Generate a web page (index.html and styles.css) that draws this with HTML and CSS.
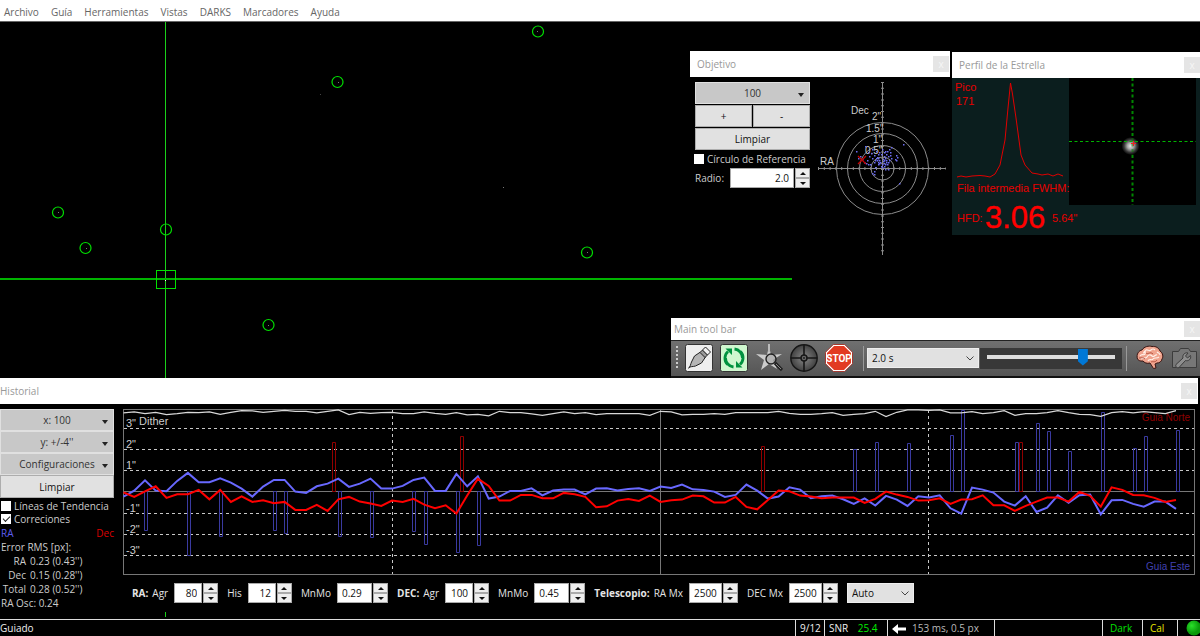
FILE: index.html
```html
<!DOCTYPE html>
<html lang="es">
<head>
<meta charset="utf-8">
<title>Guiado</title>
<link rel="stylesheet" href="styles.css">
</head>
<body>
<div class="app">
  <nav class="menubar">
    <button class="menu">Archivo</button>
    <button class="menu">Guía</button>
    <button class="menu">Herramientas</button>
    <button class="menu">Vistas</button>
    <button class="menu">DARKS</button>
    <button class="menu">Marcadores</button>
    <button class="menu">Ayuda</button>
  </nav>

  <main class="view">
    <svg class="sky" width="1200" height="357" viewBox="0 21 1200 357" aria-hidden="true">
      <path d="M165.500 21V378" stroke="#1ad01a"/>
      <path d="M0 279H792" stroke="#00b400" stroke-width="2"/>
      <rect x="156.500" y="270.500" width="19" height="18" fill="none" stroke="#00e000"/>
      <g fill="none" stroke="#00e000" stroke-width="1.200">
        <circle cx="538" cy="31.500" r="5.500"/><circle cx="337.500" cy="82" r="5.500"/>
        <circle cx="58" cy="212.500" r="5.500"/><circle cx="85.500" cy="248" r="5.500"/>
        <circle cx="166" cy="229.500" r="5.500"/><circle cx="587" cy="252.500" r="5.500"/>
        <circle cx="268.500" cy="325" r="5.500"/>
      </g>
      <g fill="#777">
        <rect x="537" y="31" width="1" height="1"/><rect x="338" y="82" width="1" height="1"/>
        <rect x="58" y="212" width="1" height="1"/><rect x="86" y="248" width="1" height="1"/>
        <rect x="587" y="252" width="1" height="1"/><rect x="268" y="325" width="1" height="1"/>
        <rect x="165" y="280" width="1" height="1" fill="#fff"/>
        <rect x="320" y="94" width="1" height="1" fill="#444"/><rect x="503" y="187" width="1" height="1"/>
      </g>
    </svg>

    <section class="window target">
      <header class="titlebar"><h2>Objetivo</h2><button class="close" aria-label="Cerrar">x</button></header>
      <div class="target-body">
        <div class="target-controls">
          <button class="btn drop">100</button>
          <div class="pair"><button class="btn">+</button><button class="btn">-</button></div>
          <button class="btn">Limpiar</button>
          <label class="check"><input type="checkbox">Círculo de Referencia</label>
          <div class="field radius"><label for="radius">Radio:</label>
            <input class="num" id="radius" type="text" value="2.0"><span class="spin"><button aria-label="Subir"></button><button aria-label="Bajar"></button></span></div>
        </div>
        <svg class="scope" width="130" height="177" viewBox="817 80 130 177">
          <g fill="none" stroke="#8c8c8c">
            <circle cx="882.500" cy="168.500" r="11.500"/><circle cx="882.500" cy="168.500" r="23"/>
            <circle cx="882.500" cy="168.500" r="35"/><circle cx="882.500" cy="168.500" r="46"/>
            <path d="M882.500 82V255M818 168.500H946"/>
            <path d="M882.500 82V255" stroke-width="3" stroke-dasharray="1 4.800"/>
            <path d="M818 168.500H946" stroke-width="3" stroke-dasharray="1 4.800"/>
          </g>
          <g class="scope-text">
            <text x="851" y="114">Dec</text><text x="820" y="165">RA</text>
            <text x="872" y="120">2"</text><text x="866" y="132">1.5"</text>
            <text x="873" y="143">1"</text><text x="865" y="154">0.5"</text>
          </g>
          <path id="shots" fill="#6c6cf0"/>
          <path d="M858 156l8 8m0-8l-8 8" stroke="#c80000" stroke-width="1.200"/>
        </svg>
      </div>
    </section>

    <section class="window profile">
      <header class="titlebar"><h2>Perfil de la Estrella</h2><button class="close" aria-label="Cerrar">x</button></header>
      <svg class="star" width="248" height="157" viewBox="952 78 248 157">
        <rect x="952" y="78" width="248" height="157" fill="#0b1e1e"/>
        <rect x="1069" y="78" width="127" height="127" fill="#000"/>
        <defs><radialGradient id="glow"><stop offset="0" stop-color="#e8e8e8"/><stop offset=".35" stop-color="#a5a5a5"/><stop offset=".7" stop-color="#3c3c3c"/><stop offset="1" stop-color="#000"/></radialGradient></defs>
        <path d="M1132.500 78V205" stroke="#008800" stroke-width="2" stroke-dasharray="3 2.500"/>
        <circle cx="1130.500" cy="146" r="9" fill="url(#glow)"/>
        <path d="M1132.500 138V155" stroke="#008800" stroke-opacity=".5" stroke-width="2" stroke-dasharray="3 2.500"/>
        <path d="M1069 141.500H1196" stroke="#00b400" stroke-dasharray="3 2.500"/>
        <path d="M1133.500 141v5M1131 143.500h5" stroke="#f02020"/>
        <polyline fill="none" stroke="#e00000" points="957,177 961,176 966,177 972,176 980,175.500 985,176 990,177 995,174 1000,165 1005,140 1008,108 1010.500,83 1012.500,94 1016,118 1021,155 1025,165 1032,173 1038,174 1042,175 1048,174 1053,176 1058,174 1063,176"/>
        <g class="star-text">
          <text x="955" y="91">Pico</text><text x="956" y="105">171</text>
          <text x="957" y="192">Fila intermedia FWHM:</text>
          <text x="957" y="222">HFD:</text><text class="hfd" x="985" y="228">3.06</text><text x="1052" y="222">5.64"</text>
        </g>
      </svg>
    </section>

    <section class="window tools">
      <header class="titlebar"><h2>Main tool bar</h2><button class="close" aria-label="Cerrar">x</button></header>
      <div class="toolbar">
        <span class="grip"></span>
        <button class="tool" aria-label="Conectar"><svg viewBox="0 0 28 28" width="28" height="28"><rect x=".5" y=".5" width="27" height="27" rx="2" fill="#eee" stroke="#333"/><path d="M3.500 24c2-1 2-4 3-6l3-6 6-4 5 5-4 6-6 3c-3 1-5 0-7 2z" fill="#b5b5b5" stroke="#222"/><path d="M15 8.500l2.500-2.500 5 5-2.500 2.500z" fill="#999" stroke="#222"/><path d="M17.500 6l3-3 5 5-3 3z" fill="#eee" stroke="#222"/></svg></button>
        <button class="tool" aria-label="Bucle"><svg viewBox="0 0 28 28" width="28" height="28"><rect x=".5" y=".5" width="27" height="27" rx="2" fill="#cff7cf" stroke="#333"/><g fill="none" stroke="#00923f" stroke-width="2.800"><path d="M7.500 20.500A9 9 0 0 1 8 7.500"/><path d="M14.500 5A9 9 0 0 1 22.500 14"/><path d="M20.500 7.500A9 9 0 0 1 20 20.500"/><path d="M13.500 23A9 9 0 0 1 5.500 14"/></g><path d="M5.500 4.500h6.500v6.500zM22.500 23.500h-6.500v-6.500z" fill="#00923f"/></svg></button>
        <button class="tool" aria-label="Seleccionar estrella"><svg viewBox="0 0 28 28" width="28" height="28"><path d="M14 2l2 9 11-1-9 6 4 9-8-5-8 6 3-10-8-6 11 1z" fill="#ccc"/><path d="M13 0h2v8h-2z" fill="#bbb"/><circle cx="16" cy="15" r="5" fill="#aaa" fill-opacity=".7" stroke="#222" stroke-width="1.400"/><path d="M20 19l7 7" stroke="#222" stroke-width="3.200"/><path d="M21 20l5 5" stroke="#888"/></svg></button>
        <button class="tool" aria-label="Guiar"><svg viewBox="0 0 28 28" width="28" height="28"><defs><radialGradient id="lens"><stop offset="0" stop-color="#888"/><stop offset="1" stop-color="#404040"/></radialGradient></defs><circle cx="14" cy="14" r="13.200" fill="url(#lens)" stroke="#161616" stroke-width="1.400"/><path d="M14 1v26M1 14h26" stroke="#161616" stroke-width="1.600"/><circle cx="14" cy="14" r="3" fill="#666" stroke="#161616" stroke-width="1.500"/><circle cx="14" cy="14" r="1" fill="#222"/></svg></button>
        <button class="tool" aria-label="Detener"><svg viewBox="0 0 28 28" width="28" height="28"><path d="M8.300.5h11.400l7.800 7.800v11.400l-7.800 7.800H8.300L.5 19.700V8.300z" fill="#fff" stroke="#a01c10" stroke-width=".8"/><path d="M9 2h10l7 7v10l-7 7H9l-7-7V9z" fill="#e23a22"/><text x="14" y="18" class="stop">STOP</text></svg></button>
        <span class="rule"></span>
        <select class="exposure" aria-label="Exposición"><option>2.0 s</option></select>
        <label class="slider"><input type="range" min="0" max="100" value="77" aria-label="Brillo"></label>
        <span class="rule"></span>
        <button class="tool" aria-label="Ajustes avanzados"><svg viewBox="0 0 28 28" width="28" height="28"><path d="M1.500 15C0 10 3 6.500 6 6c2-3.500 7-4.500 10-3.500 4-.5 7 1.500 8 4.500 3 2 3.500 6 2 8-.5 3-3 4-5 4l-2 1 1 4-2.500.5-3.500-5.500c-3 1-6-.5-7-2-3 .5-5-1-5.500-2z" fill="#f0a48e" stroke="#3a1512"/><path d="M4 12c2-3 4 0 5-2s-1-3 1-4 3 2 5 0 3-1 4 0M5 15c2-2 5 0 6-2s3-3 5-1 3-2 5-1M12 17c1-3 4 0 5-2s4 0 6-2M21 8c1 1 3 1 3 3M8 7c1 1 0 2-1 2" fill="none" stroke="#fff0e8" stroke-width="1.100"/><path d="M3 14c3 0 4-1 6 1M10 9c2 2 4-2 7 1M15 18c2-1 4 1 6-2" fill="none" stroke="#a8402e" stroke-width=".8"/></svg></button>
        <button class="tool" aria-label="Ajustes de cámara"><svg viewBox="0 0 28 28" width="28" height="28"><path d="M1.500 7.500h6l2-3h8l2 3h6v16h-24z" fill="#777" stroke="#3c3c3c"/><path d="M5 20.500l7-6.500c-1-3 2-6 5-5l-2.500 3 2 2 3-2.500c1 3.500-2 6-5 5l-6.500 7c-2 1-4-1-3-3z" fill="#8e8e8e" stroke="#3c3c3c"/></svg></button>
      </div>
    </section>
  </main>

  <section class="history">
    <header class="titlebar"><h2>Historial</h2><button class="close" aria-label="Cerrar">x</button></header>
    <div class="history-body">
      <div class="side">
        <button class="btn drop">x: 100</button>
        <button class="btn drop">y: +/-4''</button>
        <button class="btn drop">Configuraciones</button>
        <button class="btn">Limpiar</button>
        <label class="check"><input type="checkbox">Líneas de Tendencia</label>
        <label class="check"><input type="checkbox" checked>Correciones</label>
        <div class="legend"><span class="ra">RA</span><span class="dec">Dec</span></div>
        <p>Error RMS [px]:</p>
        <dl class="rms">
          <dt>RA</dt><dd>0.23 (0.43'')</dd>
          <dt>Dec</dt><dd>0.15 (0.28'')</dd>
          <dt>Total</dt><dd>0.28 (0.52'')</dd>
        </dl>
        <p>RA Osc: 0.24</p>
      </div>
      <div class="plot">
        <svg class="chart" viewBox="123 409 1072 166">
          <g stroke="#c8c8c8" stroke-dasharray="3 3">
            <path d="M124 428.500H1194M124 449.500H1194M124 470.500H1194M124 513.500H1194M124 534.500H1194M124 555.500H1194"/>
            <path d="M392.500 410V574M928.500 410V574"/>
          </g>
          <path d="M124 491.500H1194M660.500 410V574" stroke="#777"/>
          <rect x="123.500" y="409.500" width="1071" height="165" fill="none" stroke="#777"/>
          <g class="chart-text">
            <text x="126" y="427">3"</text><text x="139" y="425">Dither</text>
            <text x="126" y="448">2"</text><text x="126" y="469">1"</text>
            <text x="126" y="512">-1"</text><text x="126" y="533">-2"</text><text x="126" y="554">-3"</text>
            <text class="north" x="1190" y="421">Guia Norte</text><text class="east" x="1190" y="570">Guia Este</text>
          </g>
          <path id="pulses-ra" fill="none" stroke="#3a3aa0"/>
          <path id="pulses-dec" fill="none" stroke="#900000"/>
          <polyline id="mass" fill="none" stroke="#d8d8d8" stroke-width="1.200"/>
          <polyline id="line-ra" fill="none" stroke="#6868ff" stroke-width="2"/>
          <polyline id="line-dec" fill="none" stroke="#f00" stroke-width="2"/>
        </svg>
        <div class="params">
          <b>RA:</b>
          <span class="field"><label for="ra-agr">Agr</label><input class="num" id="ra-agr" value="80"><span class="spin"><button aria-label="Subir"></button><button aria-label="Bajar"></button></span></span>
          <span class="field"><label for="ra-his">His</label><input class="num" id="ra-his" value="12"><span class="spin"><button aria-label="Subir"></button><button aria-label="Bajar"></button></span></span>
          <span class="field"><label for="ra-mn">MnMo</label><input class="num wide" id="ra-mn" value="0.29"><span class="spin"><button aria-label="Subir"></button><button aria-label="Bajar"></button></span></span>
          <b>DEC:</b>
          <span class="field"><label for="dec-agr">Agr</label><input class="num" id="dec-agr" value="100"><span class="spin"><button aria-label="Subir"></button><button aria-label="Bajar"></button></span></span>
          <span class="field"><label for="dec-mn">MnMo</label><input class="num wide" id="dec-mn" value="0.45"><span class="spin"><button aria-label="Subir"></button><button aria-label="Bajar"></button></span></span>
          <b>Telescopio:</b>
          <span class="field"><label for="ra-mx">RA Mx</label><input class="num max" id="ra-mx" value="2500"><span class="spin"><button aria-label="Subir"></button><button aria-label="Bajar"></button></span></span>
          <span class="field"><label for="dec-mx">DEC Mx</label><input class="num max" id="dec-mx" value="2500"><span class="spin"><button aria-label="Subir"></button><button aria-label="Bajar"></button></span></span>
          <select class="mode" aria-label="Modo DEC"><option>Auto</option></select>
        </div>
      </div>
    </div>
  </section>

  <footer class="status">
    <span class="msg">Guiado</span>
    <span>9/12</span>
    <span class="snr">SNR <em>25.4</em></span>
    <span class="pulse"><svg width="14" height="10" viewBox="0 0 14 10" aria-hidden="true"><path d="M0 5l6-5v3.500h8v3H6V10z" fill="#fff"/></svg>153 ms, 0.5 px</span>
    <span></span>
    <span class="ok">Dark</span>
    <span class="warn">Cal</span>
    <span class="lamp"><svg width="16" height="16" viewBox="0 0 16 16" aria-hidden="true"><defs><radialGradient id="lamp" cx=".35" cy=".35"><stop offset="0" stop-color="#2ae02a"/><stop offset="1" stop-color="#0a9a0a"/></radialGradient></defs><circle cx="8" cy="8" r="7.500" fill="url(#lamp)"/></svg></span>
  </footer>
</div>
<script src="chart.js"></script>
</body>
</html>
```

FILE: styles.css
```css
* { box-sizing: border-box; }
body { margin: 0; background: #000; color: #ccc; font: 10px/14px "Open Sans", "Noto Sans", sans-serif; }
button, input, select { font: inherit; margin: 0; padding: 0; border: 0; border-radius: 0; }
h2, p, dl, dd { margin: 0; font: inherit; }
svg { display: block; }

.app { display: flex; flex-direction: column; min-height: 100vh; overflow: hidden; }

.menubar { display: flex; gap: 12px; height: 22px; padding: 2px 4px 0; background: #fff; border-bottom: 1px solid #666; flex: none; }
.menu { background: none; color: #666; }

.view { position: relative; flex: 1; min-height: 356px; overflow: hidden; }
.sky { margin-top: -1px; }

.window { position: absolute; background: #000; }
.target { left: 690px; top: 29px; width: 260px; }
.profile { left: 952px; right: 0; top: 30px; }
.tools { left: 671px; right: 0; bottom: 0; }

.titlebar { display: flex; align-items: center; justify-content: space-between; height: 26px; padding: 0 1px 0 7px; background: #fff; color: #999; }
.titlebar h2 { font-size: 10px; }
.close { width: 16px; height: 16px; background: #e5e5e5; color: #f6f6f6; line-height: 14px; }
.profile .titlebar, .tools .titlebar { padding-right: 0; }
.tools .titlebar { height: 22px; padding-left: 3px; }

.target-body { display: flex; gap: 7px; padding: 3px 3px 2px 5px; }
.target-controls { display: flex; flex-direction: column; width: 115px; gap: 1px; padding-top: 2px; }
.btn { position: relative; height: 22px; width: 100%; background: #e1e1e1; border: 1px solid #adadad; color: #111; text-align: center; }
.drop { background: #c8c8c8; border-color: #e0e0e0; color: #333; }
.drop::after { content: ""; position: absolute; right: 5px; top: 10px; border: 3px solid transparent; border-top: 4px solid #222; border-bottom: 0; }
.pair { display: flex; gap: 1px; }
.check { display: flex; align-items: center; gap: 3px; height: 14px; white-space: nowrap; }
.check input { appearance: none; position: relative; width: 10px; height: 10px; background: #fff; flex: none; }
.check input:checked::after { content: ""; position: absolute; left: 2px; top: 2px; width: 6px; height: 3px; border: solid #222; border-width: 0 0 1px 1px; transform: rotate(-45deg); }
.target-controls .check { margin: 1px 0 1px -1px; }

.field { display: flex; align-items: center; white-space: nowrap; }
.num { width: 28px; height: 20px; padding: 0 4px; background: #fff; color: #111; text-align: right; border: 1px solid #aaa; margin-left: 6px; }
.num.wide { width: 35px; text-align: left; }
.num.max { width: 33px; text-align: left; }
.radius .num { flex: 1; min-width: 0; }
.spin { display: grid; grid-template-rows: 10px 10px; width: 15px; margin-left: 1px; background: #fff; }
.spin button { display: grid; place-items: center; background: #eee; border: 1px solid #aaa; }
.spin button::after { content: ""; border: 3px solid transparent; border-bottom: 3px solid #111; border-top: 0; }
.spin button:last-child::after { transform: rotate(180deg); }
.scope-text { fill: #ccc; font: 10px "Liberation Sans", Arial, sans-serif; }

.star-text { fill: #e80000; font: 11px "Liberation Sans", Arial, sans-serif; }
.star-text .hfd { font-size: 31px; fill: #f00; stroke: #f00; stroke-width: .4px; }

.toolbar { display: flex; align-items: center; gap: 7px; height: 38px; padding: 0 1px 1px 5px; background: linear-gradient(#707070, #555); border-top: 1px solid #222; border-bottom: 2px solid #111; overflow: hidden; }
.grip { width: 2px; height: 24px; background: repeating-linear-gradient(#ccc 0 2px, transparent 2px 4px); }
.tool { width: 28px; height: 28px; background: none; flex: none; }
.stop { fill: #fff; font: 700 10px Roboto, "Liberation Sans", sans-serif; text-anchor: middle; }
.rule { width: 1px; height: 25px; margin: 0 2px 0 3px; background: #999; flex: none; }
select { appearance: none; height: 20px; padding: 0 4px; color: #111; border: 1px solid #eee;
  background: #e1e1e1 url("data:image/svg+xml,%3Csvg xmlns='http://www.w3.org/2000/svg' width='8' height='5'%3E%3Cpath d='M.5.5L4 4L7.500.5' fill='none' stroke='%23444'/%3E%3C/svg%3E") no-repeat right 4px center; }
.exposure { width: 112px; margin-left: -6px; flex: none; }
.slider { display: flex; flex: 1; height: 21px; margin: 0 -6px; padding: 0 7px; background: #383838; }
.slider input { appearance: none; width: 100%; min-width: 0; height: 19px; background: linear-gradient(#ddd, #ddd) center / 100% 4px no-repeat; }
.slider input::-webkit-slider-thumb { appearance: none; width: 10px; height: 17px; background: #0078d7; clip-path: polygon(0 0, 100% 0, 100% 75%, 50% 100%, 0 75%); }

.history { position: relative; flex: none; background: #000; }
.history .titlebar { margin-right: 2px; padding-left: 0; }
.history-body { display: grid; grid-template-columns: 114px 1fr; gap: 9px; padding: 5px 5px 4px 0; }
.side { height: 206px; }
.side .btn { display: block; height: 22px; padding: 0; }
.side .btn:nth-child(4) { height: 23px; margin-bottom: 1px; }
.side .check { padding-left: 1px; height: 13px; }
.side p { padding-left: 1px; }
.legend { display: flex; justify-content: space-between; padding: 1px 0 0 1px; }
.ra { color: #5c5cf0; }
.dec { color: #d00; }
.rms { display: grid; grid-template-columns: 26px 1fr; column-gap: 4px; }
.rms dt { text-align: right; }
.chart { width: 100%; height: auto; }
.chart-text { fill: #ccc; font: 11px "Liberation Sans", Arial, sans-serif; }
.chart-text .north { fill: #900000; text-anchor: end; font-size: 10px; }
.chart-text .east { fill: #4040b0; text-anchor: end; font-size: 10px; }
.params { display: flex; align-items: center; padding: 8px 0 0 9px; color: #e4e4e4; }
.params b { margin-right: 4px; white-space: nowrap; }
.params .field { margin-right: 9px; }
.params b, .params label { flex: none; }
.mode { width: 67px; }
.history::after { content: ""; position: absolute; left: 165px; bottom: 2px; width: 1px; height: 5px; background: #1ad01a; }

.status { display: grid; grid-template-columns: 1fr 29px 63px 107px 108px 40px 35px 23px; height: 17px; border-top: 1px solid #ddd; color: #eee; flex: none; overflow: hidden; line-height: 17px; }
.status > span { padding-left: 4px; border-left: 1px solid #ddd; white-space: nowrap; }
.status .msg { padding-left: 0; border: 0; }
.snr em { font-style: normal; color: #0e0; margin-left: 7px; }
.pulse { display: flex; align-items: center; gap: 6px; color: #bbb; }
.status .ok { color: #00e000; padding-left: 7px; }
.status .warn { color: #e6e600; padding-left: 7px; }
.status .lamp { padding-left: 8px; overflow: hidden; }
```

FILE: chart.js
```js
// Samples are in thirds of a pixel from the zero axis, one per exposure.
const ra = [-15,3,34,3,1,32,56,28,28,40,27,9,-15,15,35,35,0,-4,16,24,39,14,24,39,9,9,
  17,35,42,2,2,53,16,46,-21,-15,2,2,10,-11,3,6,6,-8,9,10,3,8,10,2,15,
  11,21,7,5,0,-16,-10,21,3,-21,-15,13,6,-20,-14,-12,-23,-37,-20,-42,-13,-24,-43,-14,-18,
  -11,-50,-66,12,6,-3,-30,-42,-14,-61,-48,-11,-34,-11,-9,-68,-26,-25,-37,-45,-30,-30,-52];
const dec = [-2,-16,1,16,-19,-8,-8,5,-23,5,-31,-14,-31,-26,-35,-31,-55,-55,-40,-58,-23,-16,-30,-36,-43,-27,
  -31,-22,-39,-50,-41,-66,-12,39,17,-27,-27,-10,-10,-20,-20,-4,-8,-16,-47,-44,-27,-22,-28,-12,-31,
  -26,-24,-12,-14,-33,-33,-16,-46,-53,-25,3,1,-12,-15,-20,-18,-18,-18,-34,-22,0,-9,-16,-27,-26,
  -20,-37,-24,-23,-11,-41,-41,-58,-43,-30,-18,-18,-30,-1,-13,-45,13,5,-10,-11,-19,-31,-25];
const mass = [39,36,41,37,44,41,37,38,36,43,37,32,33,37,34,31,34,34,39,34,30,44,37,40,38,37,
  41,41,36,40,43,38,45,43,48,34,38,38,42,46,41,36,41,38,44,41,41,41,41,46,34,
  36,45,43,43,41,43,38,38,38,38,34,40,43,43,41,38,46,43,41,34,50,37,30,30,31,
  30,39,39,35,41,38,32,46,41,41,38,32,38,43,44,49,38,35,39,35,38,41,32].map(v => 275 - v);
const pulsesRa = [[146,530],[189,555],[221,536],[275,530],[286,533],[340,536],[372,537],[414,531],[426,544],[458,552],[479,545],
  [855,449],[877,442],[909,443],[952,435],[963,410],[1017,442],[1038,423],[1049,431],[1070,451],[1103,412],[1135,448],[1146,436],[1178,430]];
const pulsesDec = [[334,442],[462,436],[763,446],[1021,442]];
const shots = [[653,297],[514,319],[541,304],[643,414],[619,305],[520,340],[545,345],[550,358],[538,350],[558,325],[566,350],
  [562,385],[566,378],[570,366],[580,340],[575,335],[600,371],[608,372],[566,388],[590,312],[600,318],[612,312],[604,326],
  [616,322],[598,332],[610,334],[632,330],[636,336],[630,342],[634,346],[618,340],[612,344],[588,326],[582,322],[574,318],
  [560,312],[548,322],[552,334],[560,340],[544,354],[570,344],[578,350],[582,354],[576,346],[574,340],[586,350],[590,356],
  [594,348],[598,354],[602,350],[600,358],[606,356],[596,362],[588,362],[604,346],[594,342],[610,352],[582,346],[598,346],
  [590,366],[580,358],[600,338],[606,318],[568,330],[556,356],[525,334],[532,342],[614,330],[578,328],[596,322]];

const line = (id, data) => document.getElementById(id).setAttribute('points',
  data.map((v, i) => `${(123.5 + i * 10.74).toFixed(1)},${(491.6 - v / 3).toFixed(1)}`).join(' '));
const bars = (id, data) => document.getElementById(id).setAttribute('d',
  data.map(([x, y]) => `M${x - 1.5} 491.5V${y + 0.5}h3V491.5z`).join(''));

line('line-ra', ra);
line('line-dec', dec);
line('mass', mass);
bars('pulses-ra', pulsesRa);
bars('pulses-dec', pulsesDec);
document.getElementById('shots').setAttribute('d',
  shots.map(([x, y]) => `M${Math.round(685 + x / 3)} ${Math.round(45 + y / 3)}h1.500v1.500h-1.500z`).join(''));
```
